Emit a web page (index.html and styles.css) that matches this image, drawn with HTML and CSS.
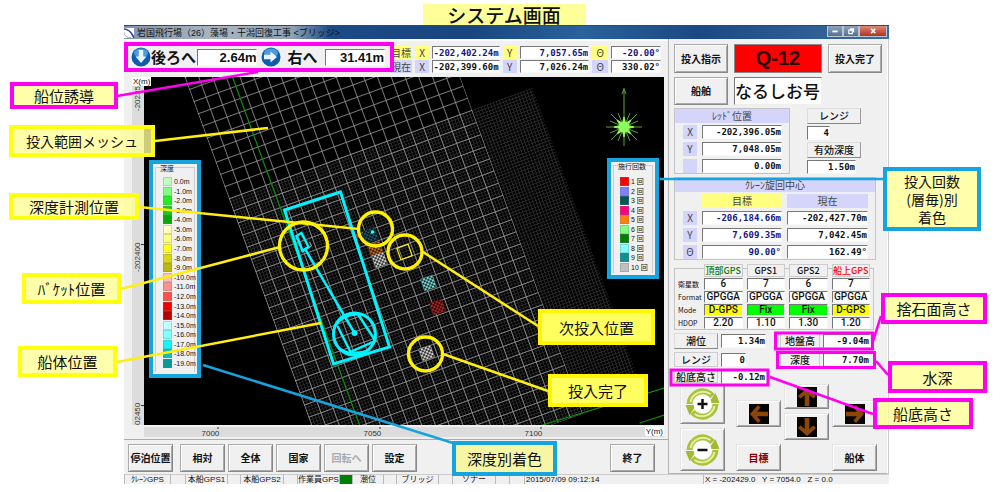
FILE: index.html
```html
<!DOCTYPE html>
<html lang="ja">
<head>
<meta charset="utf-8">
<title>システム画面</title>
<link rel="stylesheet" href="styles.css">
</head>
<body>
<main class="figure">
  <h1 class="figure-title">システム画面</h1>

  <section class="window">
    <header class="titlebar">
      <svg class="app-icon" viewBox="0 0 10 10" aria-hidden="true"><rect width="10" height="10" fill="#fff"/><path d="M0 1C4 1 8 5 10 10" stroke="#1c3fa0" stroke-width="1.6" fill="none"/><path d="M0 4C0 8 3 10 7 9.500" stroke="#9ab" fill="none"/></svg>
      <span class="app-name">岩国飛行場（26）藻場・干潟回復工事 &lt;ブリッジ&gt;</span>
      <div class="win-buttons">
        <button class="wb" aria-label="最小化"><svg viewBox="0 0 16 10"><rect x="5" y="4.500" width="6" height="2" fill="#fff"/></svg></button>
        <button class="wb" aria-label="元に戻す"><svg viewBox="0 0 16 10"><path d="M7 2.500h4v4M5.500 4h4v4h-4z" fill="none" stroke="#fff" stroke-width="1.300"/></svg></button>
        <button class="wb wb-close" aria-label="閉じる"><svg viewBox="0 0 28 10"><path d="M12 2.500l4.500 5M16.500 2.500l-4.500 5" stroke="#fff" stroke-width="1.700"/></svg></button>
      </div>
    </header>

    <div class="content">
      <div class="left">
        <div class="top-row">
          <div class="guide">
            <svg class="dir" viewBox="0 0 20 20" aria-hidden="true"><circle cx="10" cy="10" r="9.500" fill="#0d5cae"/><ellipse cx="10" cy="6" rx="7" ry="4.500" fill="#4d9be0"/><path d="M7.800 3h4.400v6.500h3.300L10 16 4.500 9.500h3.300z" fill="#eaf5ff"/></svg>
            <label class="guide-label" for="g1">後ろへ</label><input class="field guide-field" id="g1" value="2.64m" readonly>
            <svg class="dir" viewBox="0 0 20 20" aria-hidden="true"><circle cx="10" cy="10" r="9.500" fill="#0d5cae"/><ellipse cx="10" cy="6" rx="7" ry="4.500" fill="#4d9be0"/><path d="M3 7.800v4.400h6.500v3.300L16 10 9.500 4.500v3.300z" fill="#eaf5ff"/></svg>
            <label class="guide-label guide-right" for="g2">右へ</label><input class="field guide-field" id="g2" value="31.41m" readonly>
          </div>
          <div class="readouts">
            <span class="tag yellow">目標</span><label class="tag yellow" for="tx">X</label><input class="field blue" id="tx" value="-202,402.24m" readonly><label class="tag yellow" for="ty">Y</label><input class="field blue" id="ty" value="7,057.65m" readonly><label class="tag yellow" for="tt">Θ</label><input class="field blue" id="tt" value="-20.00°" readonly>
            <span class="tag">現在</span><label class="tag" for="cx">X</label><input class="field" id="cx" value="-202,399.60m" readonly><label class="tag" for="cy">Y</label><input class="field" id="cy" value="7,026.24m" readonly><label class="tag" for="ct">Θ</label><input class="field" id="ct" value="330.02°" readonly>
          </div>
        </div>

        <div class="chart">
          <svg class="axis-x" viewBox="0 0 12 348" aria-label="X(m)">
            <g class="axis-text">
              <text transform="translate(8 34) rotate(-90)">-20235</text>
              <text transform="translate(8 195) rotate(-90)">-202400</text>
              <text transform="translate(8 348) rotate(-90)">02450</text>
            </g>
            <path d="M9 167.500h3M9 328.500h3" stroke="#333"/>
          </svg>
          <span class="axis-badge x-badge">X(m)</span>
          <div class="map">
            <svg class="map-svg" viewBox="144 77 521 348" preserveAspectRatio="xMidYMid slice" role="img" aria-label="投入範囲">
              <defs>
                <pattern id="cell" width="12.920" height="12.920" patternUnits="userSpaceOnUse"><path d="M0 0H12.920M0 0V12.920" stroke="#a0a0a0" stroke-width="1.500" fill="none"/></pattern>
                <pattern id="fine" width="3.230" height="3.230" patternUnits="userSpaceOnUse"><path d="M0 0H3.230M0 0V3.230" stroke="#343434" stroke-width="1.300" fill="none"/></pattern>
                <pattern id="hatch" width="4" height="4" patternUnits="userSpaceOnUse"><path d="M0 0h2v2H0zM2 2h2v2H2z" fill="#000" fill-opacity=".75"/></pattern>
                <g id="block"><rect x="-6.500" y="-6.500" width="13" height="13"/><rect x="-6.500" y="-6.500" width="13" height="13" fill="url(#hatch)"/></g>
              </defs>
              <rect x="144" y="77" width="521" height="348" fill="#000"/>
              <g transform="translate(185 77) rotate(-20)">
                <rect y="129.200" width="323" height="323" fill="url(#fine)"/>
                <rect width="259" height="452.500" fill="url(#cell)"/>
              </g>
              <path d="M233 77L360 425M543 425L665 388M640 423L665 415" stroke="#0a920a" stroke-width="1.200" fill="none"/>
              <use href="#block" transform="translate(371 235) rotate(-20)" fill="#1d5662"/>
              <use href="#block" transform="translate(376 249) rotate(-20)" fill="#c86a20"/>
              <use href="#block" transform="translate(380 260) rotate(-20)" fill="#ccc"/>
              <use href="#block" transform="translate(429 283) rotate(-20)" fill="#7cd4d4"/>
              <use href="#block" transform="translate(438 307) rotate(-20)" fill="#b02424"/>
              <use href="#block" transform="translate(427 353) rotate(-20)" fill="#ccc"/>
              <circle cx="373" cy="232" r="1.800" fill="#3ff"/>
              <circle cx="358" cy="236" r="2" fill="#c22"/>
              <g fill="none" stroke="#00f4ff" stroke-width="3">
                <path d="M285 210L341 192L390 347L334 364Z"/>
                <circle cx="355" cy="334" r="21"/>
                <path d="M305 248L355 333M338 326L351 352L376 341L359 315" stroke-width="2.500"/>
                <path d="M336 326Q344 313 361 315M341 349Q352 356 370 350" stroke-width="2"/>
                <path d="M297 236L302 233L309 247L303 251Z" stroke-width="2.500"/>
              </g>
              <circle cx="355" cy="333" r="3" fill="#00f4ff"/>
              <path d="M310 242l2 4-3 2" stroke="#bbb" fill="none"/>
              <g fill="none" stroke="#fff200" stroke-width="3.300">
                <circle cx="304" cy="246" r="24"/><circle cx="376" cy="229" r="17"/><circle cx="405.500" cy="252" r="17"/><circle cx="426" cy="354" r="17"/>
                <rect x="-6" y="-6" width="12" height="12" stroke-width="1.200" transform="translate(405 252) rotate(-20)"/>
              </g>
              <g transform="translate(624.500 127)" stroke="#5da33c" fill="none">
                <path d="M0-39V19M-18 0H18M-13-13L13 13M13-13L-13 13M-6-14L6 14M6-14L-6 14M-14-6L14 6M14-6L-14 6"/>
                <path d="M0-10L2-2L10 0L2 2L0 10L-2 2L-10 0L-2-2ZM-7-7L0-3L7-7L3 0L7 7L0 3L-7 7L-3 0Z" fill="#8ffb5c" stroke="#8ffb5c"/>
                <path d="M-2-33L0-38L2-33"/>
              </g>
            </svg>
            <section class="legend depth">
              <h2>深度</h2>
              <ul><li>0.0m</li><li>-1.0m</li><li>-2.0m</li><li>-3.0m</li><li>-4.0m</li><li>-5.0m</li><li>-6.0m</li><li>-7.0m</li><li>-8.0m</li><li>-9.0m</li><li>-10.0m</li><li>-11.0m</li><li>-12.0m</li><li>-13.0m</li><li>-14.0m</li><li>-15.0m</li><li>-16.0m</li><li>-17.0m</li><li>-18.0m</li><li>-19.0m</li></ul>
            </section>
            <section class="legend count">
              <h2>施行回数</h2>
              <ul><li>1 回</li><li>2 回</li><li>3 回</li><li>4 回</li><li>5 回</li><li>6 回</li><li>7 回</li><li>8 回</li><li>9 回</li><li>10 回</li></ul>
            </section>
          </div>
          <div class="axis-y">
            <svg viewBox="0 0 521 10" preserveAspectRatio="xMidYMid slice" aria-hidden="true"><g class="axis-text"><text x="58" y="9">7000</text><text x="220" y="9">7050</text><text x="381" y="9">7100</text></g><path d="M74.500 0v2M236.500 0v2M397.500 0v2" stroke="#333"/></svg>
            <span class="axis-badge y-badge">Y(m)</span>
          </div>
        </div>

        <nav class="commands">
          <button class="btn first">停泊位置</button><button class="btn">相対</button><button class="btn">全体</button><button class="btn">国家</button><button class="btn" disabled>回転へ</button><button class="btn">設定</button><button class="btn last">終了</button>
        </nav>
      </div>

      <aside class="side">
        <div class="orders">
          <button class="btn">投入指示</button><output class="block-id">Q-12</output><button class="btn">投入完了</button>
          <button class="btn">船舶</button><output class="ship-name">なるしお号</output>
        </div>

        <div class="lead-row">
          <section class="group lead">
            <h2 class="group-head">ﾚｯﾄﾞ位置</h2>
            <div class="lead-grid">
              <label class="tag" for="lx">X</label><input class="field" id="lx" value="-202,396.05m" readonly>
              <label class="tag" for="ly">Y</label><input class="field" id="ly" value="7,048.05m" readonly>
              <span class="tag"></span><input class="field" aria-label="高さ" value="0.00m" readonly>
            </div>
          </section>
          <div class="range">
            <button class="btn small">レンジ</button><input class="field narrow" aria-label="レンジ" value="4" readonly>
            <button class="btn small">有効深度</button><input class="field" aria-label="有効深度" value="1.50m" readonly>
          </div>
        </div>

        <section class="group crane">
          <h2 class="group-head">ｸﾚｰﾝ旋回中心</h2>
          <div class="crane-grid">
            <span></span><span class="tag yellow">目標</span><span class="tag">現在</span>
            <span class="tag">X</span><input class="field blue" aria-label="目標 X" value="-206,184.66m" readonly><input class="field" aria-label="現在 X" value="-202,427.70m" readonly>
            <span class="tag">Y</span><input class="field blue" aria-label="目標 Y" value="7,609.35m" readonly><input class="field" aria-label="現在 Y" value="7,042.45m" readonly>
            <span class="tag">Θ</span><input class="field blue" aria-label="目標 角度" value="90.00°" readonly><input class="field" aria-label="現在 角度" value="162.49°" readonly>
          </div>
        </section>

        <div class="gps">
          <table>
            <tr><td class="none"></td><th class="green">頂部GPS</th><th>GPS1</th><th>GPS2</th><th class="red">船上GPS</th></tr>
            <tr><th class="rowhead">衛星数</th><td>6</td><td>7</td><td>6</td><td>7</td></tr>
            <tr><th class="rowhead">Format</th><td>GPGGA</td><td>GPGGA</td><td>GPGGA</td><td>GPGGA</td></tr>
            <tr><th class="rowhead">Mode</th><td class="dgps">D-GPS</td><td class="fix">Fix</td><td class="fix">Fix</td><td class="dgps">D-GPS</td></tr>
            <tr><th class="rowhead">HDOP</th><td>2.20</td><td>1.10</td><td>1.30</td><td>1.20</td></tr>
          </table>
        </div>

        <div class="levels">
          <button class="btn small">潮位</button><input class="field" aria-label="潮位" value="1.34m" readonly><label class="cap" for="jg">地盤高</label><input class="field" id="jg" value="-9.04m" readonly>
          <label class="cap" for="rg">レンジ</label><input class="field narrow" id="rg" value="0" readonly><label class="cap" for="dp">深度</label><input class="field" id="dp" value="7.70m" readonly>
          <label class="cap" for="kl">船底高さ</label><input class="field" id="kl" value="-0.12m" readonly>
        </div>

        <svg class="symbols" aria-hidden="true">
          <symbol id="turn" viewBox="0 0 34 32"><path d="M4 16A13 13 0 0 1 27 8" fill="none" stroke="#a9c23a" stroke-width="6"/><path d="M30 16A13 13 0 0 1 7 24" fill="none" stroke="#a9c23a" stroke-width="6"/><path d="M23 15h11l-4-10zM0 17h11l-7 10z" fill="#a3ba30"/><path d="M5 14A13 13 0 0 1 25 6M29 18A13 13 0 0 1 9 26" fill="none" stroke="#e6f0a0" stroke-width="2"/><circle cx="17" cy="16" r="9" fill="#fff"/></symbol>
          <symbol id="arrow" viewBox="0 0 20 20"><rect width="20" height="20" fill="#080400"/><path d="M10 1L19 9l-2.500 2.500L12.300 8v11H7.700V8L3.500 11.500 1 9z" fill="#8a4708"/></symbol>
        </svg>
        <div class="controls">
          <div class="zoom">
            <button class="btn" aria-label="拡大"><svg viewBox="0 0 34 32"><use href="#turn"/><path d="M12 16h10M17 11v10" stroke="#111" stroke-width="2.500"/></svg></button>
            <button class="btn" aria-label="縮小"><svg viewBox="0 0 34 32"><use href="#turn"/><path d="M12 16h10" stroke="#111" stroke-width="2.500"/></svg></button>
          </div>
          <div class="pad">
            <button class="btn west" aria-label="左"><svg><use href="#arrow"/></svg></button>
            <button class="btn north" aria-label="上"><svg><use href="#arrow"/></svg></button>
            <button class="btn south" aria-label="下"><svg><use href="#arrow"/></svg></button>
            <button class="btn east" aria-label="右"><svg><use href="#arrow"/></svg></button>
            <button class="btn target">目標</button>
            <button class="btn hull">船体</button>
          </div>
        </div>
      </aside>
    </div>

    <footer class="status">
      <span>ｸﾚｰﾝGPS</span><span></span><span>本船GPS1</span><span></span><span>本船GPS2</span><span></span><span>作業員GPS</span><span class="lamp"></span><span>潮位</span><span></span><span>ブリッジ</span><span></span><span>ソナー</span><span></span><span></span><span class="text">2015/07/09 09:12:14</span><span class="text">X = -202429.0&nbsp;&nbsp; Y = 7054.0&nbsp;&nbsp; Z = 0.0</span>
    </footer>
  </section>

  <svg class="leaders" viewBox="0 0 1000 492" preserveAspectRatio="none" aria-hidden="true">
    <path class="l-yellow" d="M155 141L268 128M139 207L359 229M121 289L280 247M117 362L321 323M423 252L538 326M443 354L548 391"/>
    <path class="l-blue" d="M660 179H883M203 365L453 443"/>
    <path class="l-magenta" d="M117 96L258 72M873 341L881 316M876 361L888 375M770 377L873 414"/>
    <g class="l-box"><rect x="775.500" y="333" width="97" height="16"/><rect x="777.500" y="352.500" width="97" height="15"/><rect x="671" y="370" width="97" height="15"/></g>
  </svg>
  <p class="note magenta n-guide">船位誘導</p>
  <p class="note n-mesh">投入範囲メッシュ</p>
  <p class="note n-depthpos">深度計測位置</p>
  <p class="note n-bucket">ﾊﾞｹｯﾄ位置</p>
  <p class="note n-hull">船体位置</p>
  <p class="note strong n-next">次投入位置</p>
  <p class="note strong n-done">投入完了</p>
  <p class="note cyan n-color">深度別着色</p>
  <p class="note cyan n-count">投入回数<br>(層毎)別<br>着色</p>
  <p class="note magenta n-stone">捨石面高さ</p>
  <p class="note magenta n-water">水深</p>
  <p class="note magenta n-keel">船底高さ</p>
</main>
</body>
</html>
```

FILE: styles.css
```css
* { box-sizing: border-box; }

body {
  margin: 0;
  background: #fff;
  color: #111;
  font-family: "Liberation Sans", "Noto Sans CJK JP", sans-serif;
}

h1, h2, p, ul { margin: 0; padding: 0; list-style: none; }
button, input { font: inherit; color: inherit; margin: 0; padding: 0; }

.figure { position: relative; min-height: 492px; padding-top: 4px; }

.figure-title {
  width: 163px;
  margin: 0 auto;
  position: relative;
  left: 4px;
  background: #ffff99;
  font: 500 19px/21px "Noto Sans CJK JP", sans-serif;
  text-align: center;
}

/* application window */
.window {
  margin: 0 11.1% 0 12.4%;
  background: #f0f0f0;
  font-size: 10px;
}

.titlebar {
  display: flex;
  align-items: center;
  height: 14px;
  background: linear-gradient(90deg, #8194ad 0, #a9b6c3 12%, #8ea1b5 22%, #1c4a86 27%, #19457f 45%, #2a629b 60%, #1b4883 75%, #3d6d9f 100%);
  border-top: 1px solid #2b4a70;
}
.app-icon { width: 10px; height: 10px; }
.app-name { flex: 1; margin-left: 3px; font: 9px/12px "Liberation Sans", "Noto Sans CJK JP", sans-serif; white-space: nowrap; }
.win-buttons { display: flex; align-self: flex-start; margin-right: 2px; }
.wb { width: 16px; height: 11px; border: 1px solid #b9c6d6; border-top: 0; background: linear-gradient(#8fa5bf, #54708f); display: flex; }
.wb svg { width: 100%; height: 100%; }
.wb-close { width: 28px; background: linear-gradient(#d98a7c, #b5301c); }

.content { display: flex; border-right: 1px solid #ccc; }
.left { flex: 1; min-width: 0; border-top: 2px solid #fbfbfb; }
.side { width: 220px; padding: 5px 0 2px 5px; border-left: 1px solid #b4b4b4; border-right: 1px solid #fff; border-bottom: 1px solid #b4b4b4; }

/* shared parts */
.field {
  width: 100%;
  height: 14px;
  border: 1px solid;
  border-color: #777 #f8f8f8 #f8f8f8 #777;
  border-radius: 0;
  background: #fff;
  font: bold 9px/12px "DejaVu Sans Mono", monospace;
  text-align: right;
}
.blue { color: #15157c; }
.tag {
  display: flex;
  align-items: center;
  justify-content: center;
  background: #d5d5fb;
  color: #444;
  font: 10px/12px "Noto Sans CJK JP", sans-serif;
  overflow: hidden;
}
.tag.yellow { background: #ffff80; }
.btn {
  display: flex;
  align-items: center;
  justify-content: center;
  border: 1px solid;
  border-color: #aaa #888 #888 #aaa;
  box-shadow: inset 1px 1px #fff, inset -1px -1px #aaa;
  background: #f0f0f0;
  font: bold 10px/12px "Noto Sans CJK JP", sans-serif;
  white-space: nowrap;
}
.btn:disabled { color: #aaa; }
.small { font-weight: 500; border-color: #ddd #999 #888 #ddd; box-shadow: none; }

/* top row */
.top-row { display: flex; align-items: flex-start; padding-top: 1px; height: 36px; }
.guide {
  position: relative;
  z-index: 1;
  flex: none;
  display: flex;
  align-items: center;
  width: 270px;
  height: 30px;
  padding: 0 5px 0 3px;
  border: 4px solid #ff00f0;
}
.dir { flex: none; width: 20px; height: 20px; }
.guide-label { width: 47px; font: bold 15px/20px "Noto Sans CJK JP", sans-serif; white-space: nowrap; }
.guide-right { width: 44px; padding-left: 6px; }
.guide-field { width: 60px; height: 17px; margin-right: 4px; font: bold 13px/15px "Liberation Sans", sans-serif; }
.guide-field:last-child { margin: 0; }
.readouts {
  flex: 1;
  display: grid;
  grid-template-columns: 22px 14px 68fr 14px 70fr 16px 50fr;
  grid-template-rows: 13px 13px;
  gap: 1px 3px;
  margin: 4px 7px 0 -4px;
}
.readouts .field { height: 13px; }

/* chart */
.chart {
  position: relative;
  display: grid;
  grid-template-columns: 12px 1fr;
  row-gap: 2px;
  padding: 0 4px 2px 8px;
  border-bottom: 1px solid #aaa;
}
.axis-x { width: 12px; height: 348px; background: #dcdcdc; }
.axis-text { font: 8px "Liberation Sans", sans-serif; fill: #333; }
.axis-badge { position: absolute; z-index: 1; background: #fff; font: 8px/9px "Liberation Sans", sans-serif; padding: 0 1px; }
.x-badge { left: 8px; top: 0; }
.y-badge { right: 0; top: 0; }
.map { position: relative; height: 348px; background: #000; }
.map-svg { display: block; width: 100%; height: 100%; }
.axis-y { position: relative; grid-column: 2; height: 10px; background: #dcdcdc; }
.axis-y svg { display: block; width: 100%; height: 10px; }

.legend { position: absolute; border: 4px solid #16a4de; background: #f0f0f0; }
.legend h2 { font: 7px/8px "Noto Sans CJK JP", sans-serif; position: absolute; top: 0; left: 7px; z-index: 1; background: #f0f0f0; white-space: nowrap; }
.legend::before { content: ""; position: absolute; inset: 3px 2px 2px; border: 1px solid #ccc; border-bottom: 0; }
.legend ul { position: relative; display: flex; flex-direction: column; justify-content: space-between; height: 100%; }
.legend li { display: flex; align-items: center; gap: 2px; height: 9px; font: 7px/9px "Liberation Sans", "Noto Sans CJK JP", sans-serif; white-space: nowrap; }
.legend li::before { content: ""; width: 7px; height: 7px; background: var(--c); border: 1px solid rgba(120, 120, 120, .3); }
.depth { left: 5px; top: 83px; width: 52px; height: 218px; padding: 13px 0 6px 10px; }
.count { right: 5px; top: 81px; width: 52px; height: 121px; padding: 15px 0 3px 9px; }
.depth li:nth-child(1) { --c: #c0ffc0; }
.depth li:nth-child(2) { --c: #80ff80; }
.depth li:nth-child(3) { --c: #20f020; }
.depth li:nth-child(4) { --c: #10d010; }
.depth li:nth-child(5) { --c: #08a808; }
.depth li:nth-child(6) { --c: #ffffc0; }
.depth li:nth-child(7) { --c: #ffff80; }
.depth li:nth-child(8) { --c: #ffff20; }
.depth li:nth-child(9) { --c: #d8d810; }
.depth li:nth-child(10) { --c: #b8b810; }
.depth li:nth-child(11) { --c: #ffc0c0; }
.depth li:nth-child(12) { --c: #ff9090; }
.depth li:nth-child(13) { --c: #ff5050; }
.depth li:nth-child(14) { --c: #f00000; }
.depth li:nth-child(15) { --c: #b80000; }
.depth li:nth-child(16) { --c: #c0ffff; }
.depth li:nth-child(17) { --c: #80ffff; }
.depth li:nth-child(18) { --c: #10f8f8; }
.depth li:nth-child(19) { --c: #10c0b8; }
.depth li:nth-child(20) { --c: #089898; }
.count li:nth-child(1) { --c: #f00; }
.count li:nth-child(2) { --c: #8080ff; }
.count li:nth-child(3) { --c: #005858; }
.count li:nth-child(4) { --c: #ff0080; }
.count li:nth-child(5) { --c: #ff8010; }
.count li:nth-child(6) { --c: #80ff80; }
.count li:nth-child(7) { --c: #008000; }
.count li:nth-child(8) { --c: #80ffff; }
.count li:nth-child(9) { --c: #109090; }
.count li:nth-child(10) { --c: #c0c0c0; }

.commands { display: flex; gap: 3px; padding: 4px 13px 0 4px; }
.commands .btn { width: 45px; height: 28px; }
.commands .first { margin-right: 4px; }
.commands .last { margin-left: auto; }

/* side panel */
.orders { display: grid; grid-template-columns: 54px 88px 54px; grid-template-rows: 29px 28px; gap: 4px 6px; }
.block-id { background: #f00; border: 1px solid #888; color: #2a0000; font: bold 20px/27px "Liberation Sans", sans-serif; text-align: center; }
.ship-name { background: #fff; border: 1px solid; border-color: #777 #eee #eee #777; font: 500 17px/26px "Noto Sans CJK JP", sans-serif; white-space: nowrap; }

.group { border: 1px solid #c4c4c4; }
.group-head { background: #d5d5fb; color: #444; font: 10px/14px "Noto Sans CJK JP", sans-serif; text-align: center; }
.lead-row { display: flex; gap: 17px; margin-top: 3px; }
.lead { width: 116px; }
.lead-grid { display: grid; grid-template-columns: 14px 80px; grid-auto-rows: 14px; gap: 3px 5px; padding: 2px 0 0 8px; }
.range { width: 54px; display: grid; grid-template-rows: 16px 14px 16px 14px; row-gap: 2px; }
.range .field { width: 49px; }
.range .narrow { width: 23px; }
.crane { width: 202px; margin-top: 3px; }
.crane-grid { display: grid; grid-template-columns: 14px 80px 81px; grid-auto-rows: 14px; gap: 3px 5px; padding: 2px 0 0 8px; }

.gps { position: relative; width: 200px; margin-top: 3px; }
.gps::before { content: ""; position: absolute; inset: 5px 0 0; border: 1px solid #c4c4c4; }
.gps table { position: relative; border-collapse: separate; border-spacing: 4px 1px; table-layout: fixed; width: 200px; }
.gps tr { height: 12px; }
.gps td, .gps th { height: 12px; padding: 0; border: 1px solid; border-color: #777 #f8f8f8 #f8f8f8 #777; background: #fff; font: 500 10px/10px "Roboto", "Noto Sans CJK JP", sans-serif; text-align: center; white-space: nowrap; }
.gps th { background: #f0f0f0; border-color: #ccc; font: 500 9px/11px "Noto Sans CJK JP", sans-serif; }
.gps .rowhead { border: 0; background: none; font: 7px/10px "Noto Sans CJK JP", sans-serif; text-align: left; }
.gps .none { width: 22px; border: 0; background: none; }
.gps .green { color: #0a7a0a; }
.gps .red { color: #f00; }
.gps .dgps { background: #ff0; }
.gps .fix { background: #0f0; }

.levels { display: grid; grid-template-columns: 44px 45px 40px 47px; grid-template-rows: 16px 15px 13px; gap: 3px; margin-top: 3px; }
.levels > :nth-child(4n + 3) { margin-left: 11px; width: 40px; }
.levels > :nth-child(4n + 4) { margin-left: 11px; }
.levels .cap { display: flex; align-items: center; justify-content: center; border: 1px solid #ccc; font: 500 10px/12px "Noto Sans CJK JP", sans-serif; white-space: nowrap; }
.levels .narrow { width: 25px; }
.levels > .field { align-self: center; }

.symbols { position: absolute; width: 0; height: 0; }
.controls { display: flex; gap: 11px; padding: 1px 0 0 6px; }
.controls .btn { width: 45px; border-color: #e4e4e4 #888 #888 #e4e4e4; }
.zoom { display: grid; grid-template-rows: 40px 43px; gap: 4px; }
.zoom svg { width: 35px; height: 32px; flex: none; }
.pad { display: grid; grid-template-columns: repeat(3, 45px); grid-template-rows: 25px 27px 27px; gap: 4px 3px; }
.pad svg { width: 20px; height: 20px; flex: none; }
.west { grid-area: 1 / 1 / 3 / 2; align-self: end; height: 27px; margin-bottom: 13px; }
.east { grid-area: 1 / 3 / 3 / 4; align-self: end; height: 27px; margin-bottom: 13px; }
.north { grid-area: 1 / 2; }
.south { grid-area: 2 / 2; }
.target { grid-area: 3 / 1; }
.hull { grid-area: 3 / 3; }
.controls .target { color: #8b0000; }
.west svg { transform: rotate(-90deg); }
.east svg { transform: rotate(90deg); }
.south svg { transform: rotate(180deg); }

.status {
  display: grid;
  grid-template-columns: 46px 15px 42px 13px 43px 14px 42px 13px 31px 13px 42px 14px 43px 14px 15px 1fr 186px;
  height: 10px;
}
.status span { border-left: 1px solid #bbb; border-top: 1px solid #ccc; font: 8px/9px "Liberation Sans", "Noto Sans CJK JP", sans-serif; text-align: center; white-space: nowrap; }
.status .text { text-align: left; padding-left: 1px; }
.status .lamp { background: #008000; }

/* annotations */
.leaders { position: absolute; left: 0; top: 0; width: 100%; height: 492px; fill: none; pointer-events: none; z-index: 2; }
.l-yellow { stroke: #ffee10; stroke-width: 2.500; }
.l-blue { stroke: #16a4de; stroke-width: 2.500; }
.l-magenta { stroke: #ff00f0; stroke-width: 2.500; }
.l-box { stroke: #ff00f0; stroke-width: 3; }
.note {
  position: absolute;
  z-index: 3;
  display: flex;
  align-items: center;
  justify-content: center;
  border: 4px solid #ffff10;
  background: rgba(255, 255, 150, .8);
  font: 15px/17px "Noto Sans CJK JP", sans-serif;
  white-space: nowrap;
  text-align: center;
}
.note.magenta { border-color: #ff00f0; }
.note.cyan { border-color: #16a4de; }
.note.strong { background: #ffff60; border-color: #fff600; }
.n-guide { left: 1%; top: 82px; width: 108px; height: 27px; }
.n-mesh { left: .9%; top: 125px; width: 146px; height: 32px; font-size: 14px; }
.n-depthpos { left: .9%; top: 193px; width: 130px; height: 27px; }
.n-bucket { left: 2.2%; top: 273px; width: 99px; height: 31px; }
.n-hull { left: 1.8%; top: 346px; width: 99px; height: 31px; }
.n-next { left: 53.8%; top: 309px; width: 117px; height: 36px; }
.n-done { left: 54.8%; top: 374px; width: 100px; height: 33px; }
.n-color { left: 45.2%; top: 441px; width: 105px; height: 35px; }
.note.n-color { background: #f6f6a4; }
.n-count { left: 88.3%; top: 167px; width: 98px; height: 64px; font-size: 14px; line-height: 18px; }
.n-stone { left: 88.1%; top: 293px; width: 106px; height: 31px; }
.n-water { left: 88.8%; top: 361px; width: 99px; height: 32px; }
.n-keel { left: 87.3%; top: 398px; width: 100px; height: 31px; }
```
